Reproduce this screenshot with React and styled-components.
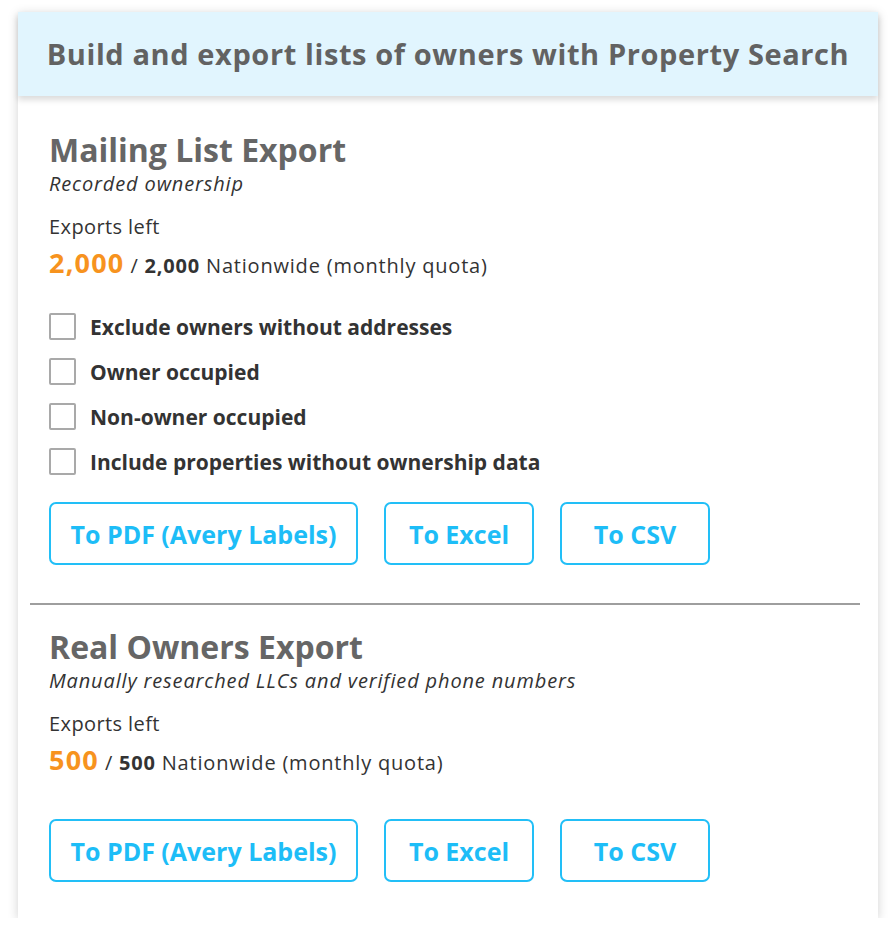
import React from "react";
import styled, { createGlobalStyle } from "styled-components";

const GlobalStyle = createGlobalStyle`
  body {
    margin: 0;
    background: #ffffff;
    font-family: "Open Sans", "Noto Sans", sans-serif;
  }
`;

const Card = styled.div`
  width: 860px;
  margin: 12px 0 0 18px;
  background: #ffffff;
  box-shadow: 0 2px 10px rgba(0, 0, 0, 0.18);
`;

const Header = styled.div`
  height: 84px;
  display: flex;
  align-items: center;
  justify-content: center;
  background: #e1f5fe;
  box-shadow: 0 4px 6px rgba(0, 0, 0, 0.14);
  position: relative;
`;

const Title = styled.h1`
  margin: 0;
  font-size: 29px;
  line-height: 36px;
  font-weight: 700;
  color: #626262;
  letter-spacing: 0.6px;
`;

const Section = styled.div`
  padding: ${(p) => p.$pad};
  display: flex;
  flex-direction: column;
  align-items: flex-start;
`;

const Heading = styled.h2`
  margin: 0;
  font-size: 32px;
  line-height: 36px;
  font-weight: 700;
  color: #666666;
`;

const Sub = styled.div`
  margin-top: 4px;
  font-size: 20px;
  line-height: 24px;
  font-style: italic;
  color: #333333;
  letter-spacing: 0.85px;
`;

const Label = styled.div`
  margin-top: 19px;
  font-size: 20px;
  line-height: 24px;
  color: #333333;
  letter-spacing: 0.4px;
`;

const Quota = styled.div`
  margin-top: 10px;
  font-size: 20px;
  line-height: 28px;
  color: #333333;
  letter-spacing: 0.8px;
`;

const Left = styled.span`
  font-size: 27px;
  font-weight: 700;
  color: #f7931e;
  letter-spacing: 1.2px;
`;

const Total = styled.strong`
  font-weight: 700;
`;

const Options = styled.div`
  margin-top: 24px;
  display: flex;
  flex-direction: column;
`;

const Option = styled.label`
  height: 45px;
  display: flex;
  align-items: center;
  gap: 14px;
  font-size: 21px;
  font-weight: 700;
  color: #333333;
  cursor: pointer;
`;

const Box = styled.span`
  width: 23px;
  height: 23px;
  border: 2px solid #a9a9a9;
  border-radius: 2px;
  background: #ffffff;
  flex-shrink: 0;
`;

const Buttons = styled.div`
  margin-top: ${(p) => p.$top}px;
  display: flex;
  gap: 26px;
`;

const Button = styled.button`
  height: 63px;
  width: ${(p) => p.$w}px;
  padding: 0;
  border: 2px solid #22bff7;
  border-radius: 7px;
  background: #ffffff;
  color: #1dbdf7;
  font-family: inherit;
  font-size: 25px;
  font-weight: 700;
  cursor: pointer;
`;

const Divider = styled.hr`
  margin: 0 18px 0 12px;
  border: 0;
  height: 2px;
  background: #9e9e9e;
`;

const options = [
  "Exclude owners without addresses",
  "Owner occupied",
  "Non-owner occupied",
  "Include properties without ownership data",
];

const ExportButtons = ({ top }) => (
  <Buttons $top={top}>
    <Button $w={309}>To PDF (Avery Labels)</Button>
    <Button $w={150}>To Excel</Button>
    <Button $w={150}>To CSV</Button>
  </Buttons>
);

export default function App() {
  return (
    <>
      <GlobalStyle />
      <Card>
        <Header>
          <Title>Build and export lists of owners with Property Search</Title>
        </Header>
        <Section $pad="36px 31px 38px">
          <Heading>Mailing List Export</Heading>
          <Sub>Recorded ownership</Sub>
          <Label>Exports left</Label>
          <Quota>
            <Left>2,000</Left> / <Total>2,000</Total> Nationwide (monthly quota)
          </Quota>
          <Options>
            {options.map((o) => (
              <Option key={o}>
                <Box />
                {o}
              </Option>
            ))}
          </Options>
          <ExportButtons top={18} />
        </Section>
        <Divider />
        <Section $pad="24px 31px 36px">
          <Heading>Real Owners Export</Heading>
          <Sub>Manually researched LLCs and verified phone numbers</Sub>
          <Label>Exports left</Label>
          <Quota>
            <Left>500</Left> / <Total>500</Total> Nationwide (monthly quota)
          </Quota>
          <ExportButtons top={42} />
        </Section>
      </Card>
    </>
  );
}
